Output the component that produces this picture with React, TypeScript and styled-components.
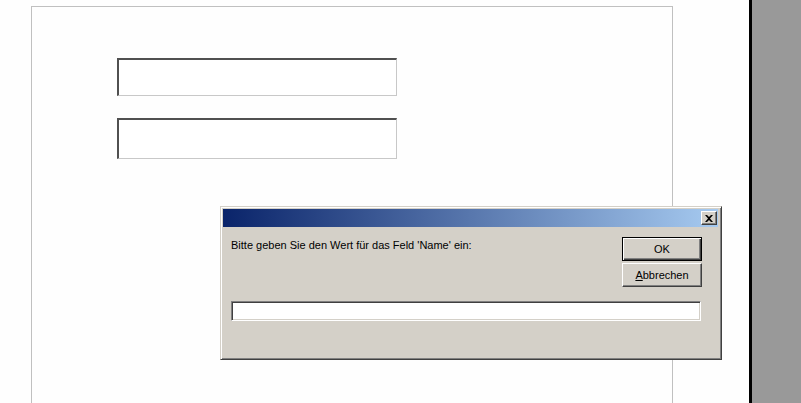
import React, { FC } from 'react'
import styled, { createGlobalStyle } from 'styled-components'

const GlobalStyle = createGlobalStyle`
    html, body {
        margin: 0;
        padding: 0;
        background: #ffffff;
        overflow: hidden;
    }
`

const Screen = styled.div`
    position: relative;
    display: flex;
    width: 801px;
    height: 403px;
    overflow: hidden;
    font-family: 'Liberation Sans', Arial, sans-serif;
`

const Workspace = styled.div`
    width: 749px;
    padding: 6px 0 0 31px;
    box-sizing: border-box;
    background: #fefefe;
`

const Sheet = styled.div`
    width: 642px;
    height: 420px;
    box-sizing: border-box;
    border: 1px solid #c0c0c0;
    padding: 51px 0 0 85px;
    display: flex;
    flex-direction: column;
    gap: 22px;
`

const SheetField = styled.div<{ $h: number }>`
    width: 280px;
    height: ${(p) => p.$h}px;
    box-sizing: border-box;
    border-top: 2px solid #505050;
    border-left: 2px solid #505050;
    border-right: 1px solid #c8c8c8;
    border-bottom: 1px solid #c8c8c8;
    background: #ffffff;
`

const Divider = styled.div`
    width: 3px;
    background: #000000;
`

const SidePanel = styled.div`
    flex: 1;
    background: #999999;
`

const Dialog = styled.div`
    position: absolute;
    left: 220px;
    top: 206px;
    width: 502px;
    height: 154px;
    box-sizing: border-box;
    background: #d4d0c8;
    border-top: 1px solid #d4d0c8;
    border-left: 1px solid #d4d0c8;
    border-right: 1px solid #404040;
    border-bottom: 1px solid #404040;
    box-shadow: inset 1px 1px 0 #ffffff, inset -1px -1px 0 #808080;
    padding: 2px 3px 3px 2px;
    display: flex;
    flex-direction: column;
`

const TitleBar = styled.div`
    height: 18px;
    background: linear-gradient(to right, #0a246a, #a6caf0);
    display: flex;
    align-items: center;
    justify-content: flex-end;
    padding-right: 1px;
`

const CloseButton = styled.div`
    width: 16px;
    height: 14px;
    box-sizing: border-box;
    background: #d4d0c8;
    border-top: 1px solid #ffffff;
    border-left: 1px solid #ffffff;
    border-right: 1px solid #404040;
    border-bottom: 1px solid #404040;
    box-shadow: inset -1px -1px 0 #808080;
    display: flex;
    align-items: center;
    justify-content: center;
`

const Body = styled.div`
    flex: 1;
    display: flex;
    flex-direction: column;
    padding: 10px 16px 0 8px;
`

const TopRow = styled.div`
    display: flex;
    justify-content: space-between;
`

const Prompt = styled.span`
    font-size: 11px;
    color: #000000;
    line-height: 13px;
    padding-top: 2px;
`

const Buttons = styled.div`
    display: flex;
    flex-direction: column;
    gap: 2px;
`

const Button = styled.div<{ $default?: boolean }>`
    width: 80px;
    height: 24px;
    box-sizing: border-box;
    background: #d4d0c8;
    font-size: 11px;
    color: #000000;
    display: flex;
    align-items: center;
    justify-content: center;
    border: 1px solid #000000;
    box-shadow: inset 1px 1px 0 #ffffff, inset -1px -1px 0 #404040, inset -2px -2px 0 #808080;
    ${(p) =>
        p.$default
            ? ''
            : `
        border-color: #ffffff #404040 #404040 #ffffff;
        box-shadow: inset -1px -1px 0 #808080;
    `}
`

const Mnemonic = styled.span`
    text-decoration: underline;
`

const ValueInput = styled.div`
    margin-top: 14px;
    width: 470px;
    height: 20px;
    box-sizing: border-box;
    background: #ffffff;
    border-top: 1px solid #808080;
    border-left: 1px solid #808080;
    border-right: 1px solid #ffffff;
    border-bottom: 1px solid #ffffff;
    box-shadow: inset 1px 1px 0 #404040, inset -1px -1px 0 #d4d0c8;
`

const CloseIcon: FC = () => (
    <svg width="8" height="7" viewBox="0 0 8 7">
        <path d="M0 0h2l2 2 2-2h2L5 3.5 8 7H6L4 5 2 7H0l3-3.5z" fill="#000000" />
    </svg>
)

const App: FC = () => {
    return (
        <>
            <GlobalStyle />
            <Screen>
                <Workspace>
                    <Sheet>
                        <SheetField $h={38} />
                        <SheetField $h={41} />
                    </Sheet>
                </Workspace>
                <Divider />
                <SidePanel />
                <Dialog>
                    <TitleBar>
                        <CloseButton>
                            <CloseIcon />
                        </CloseButton>
                    </TitleBar>
                    <Body>
                        <TopRow>
                            <Prompt>Bitte geben Sie den Wert für das Feld 'Name' ein:</Prompt>
                            <Buttons>
                                <Button $default>OK</Button>
                                <Button>
                                    <Mnemonic>A</Mnemonic>bbrechen
                                </Button>
                            </Buttons>
                        </TopRow>
                        <ValueInput />
                    </Body>
                </Dialog>
            </Screen>
        </>
    )
}

export default App
